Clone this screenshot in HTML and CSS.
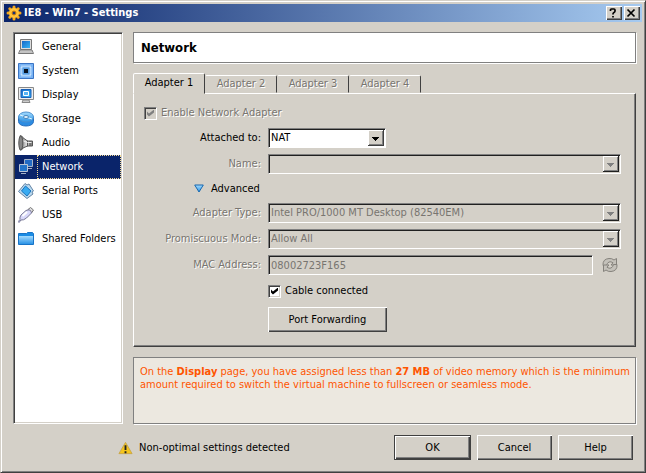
FILE: index.html
```html
<!DOCTYPE html>
<html lang="en">
<head>
<meta charset="utf-8">
<title>IE8 - Win7 - Settings</title>
<link rel="stylesheet" href="styles.css">
</head>
<body>
<svg class="defs" width="0" height="0" aria-hidden="true">
  <defs>
    <linearGradient id="blue" x1="0" y1="0" x2="1" y2="1"><stop offset="0" stop-color="#1668c8"/><stop offset="1" stop-color="#35b4f5"/></linearGradient>
    <linearGradient id="sky" x1="0" y1="0" x2="0" y2="1"><stop offset="0" stop-color="#a5dcff"/><stop offset="1" stop-color="#2b93e6"/></linearGradient>
    <linearGradient id="metal" x1="0" y1="0" x2="1" y2="0"><stop offset="0" stop-color="#666"/><stop offset=".5" stop-color="#ddd"/><stop offset="1" stop-color="#777"/></linearGradient>
  </defs>
</svg>
<div class="window">
  <header class="titlebar">
    <svg class="gear" viewBox="0 0 16 16"><g stroke="#f5a81c" stroke-width="3" stroke-linecap="round"><path d="M8 2v12M2 8h12M3.800 3.800l8.400 8.400M12.200 3.800l-8.400 8.400"/></g><circle cx="8" cy="8" r="5" fill="#ffc43a"/><circle cx="8" cy="8" r="2" fill="#173277" stroke="#d98200"/></svg>
    <h1>IE8 - Win7 - Settings</h1>
    <button class="caption" aria-label="Help"><svg viewBox="0 0 12 10"><path d="M3.500 3V2q0-1 1-1h2.500q1 0 1 1v1q0 1-1 1.500T6 6v.5M6 8v1.500" fill="none" stroke="#000" stroke-width="1.700"/></svg></button>
    <button class="caption" aria-label="Close"><svg viewBox="0 0 12 10"><path d="M2.500 1.500l7 7m0-7l-7 7" stroke="#000" stroke-width="1.700"/></svg></button>
  </header>
  <main class="body">
    <nav class="sidebar" aria-label="Settings pages">
      <a href="#"><span class="pic"><svg viewBox="0 0 16 16"><path d="M2.500.5h11v10h-11z" fill="#ddd" stroke="#777"/><path d="M4 2h8v7H4z" fill="url(#blue)"/><path d="M2 11h12l1.500 3.500H.5z" fill="#ddd" stroke="#777"/><path d="M2 13h12" stroke="#aaa"/></svg></span><span class="name">General</span></a>
      <a href="#"><span class="pic"><svg viewBox="0 0 16 16"><path d="M.5.5h15v15H.5z" fill="#78b3f5" stroke="#3b75c5"/><path d="M3.500 3.500h9v9h-9z" fill="none" stroke="#e5f5ff" stroke-width="2" stroke-dasharray="1 1"/><path d="M4.500 4.500h7v7h-7z" fill="#579de0"/><path d="M6 6h4v4H6z" fill="#081424"/></svg></span><span class="name">System</span></a>
      <a href="#"><span class="pic"><svg viewBox="0 0 16 16"><path d="M.5.500h15v12H.5z" fill="#eee" stroke="#888"/><path d="M3 2.500h10v8H3z" fill="url(#blue)" stroke="#1a61b8"/><path d="M5.500 4.500h5v4h-5z" fill="#58b5f5" stroke="#fff"/><path d="M5 13h6l1 2.500H4z" fill="#ccc" stroke="#888"/></svg></span><span class="name">Display</span></a>
      <a href="#"><span class="pic"><svg viewBox="0 0 16 16"><path d="M.5 6v4.500c0 6 15 6 15 0V6z" fill="#2c8ce2" stroke="#2b70bd"/><ellipse cx="8" cy="6" rx="7.500" ry="5" fill="url(#sky)" stroke="#4d91cf"/><path d="M8 6L2 4M8 6l6 2" stroke="#e4f7ff"/><ellipse cx="8" cy="6" rx="2.500" ry="1.500" fill="#e6f5ff" stroke="#4685bd"/></svg></span><span class="name">Storage</span></a>
      <a href="#"><span class="pic"><svg viewBox="0 0 16 16"><path d="M2 .8q2-.5 3 2L9.500 6h5v5h-5L5 13q-1 2.500-3 2z" fill="url(#metal)" stroke="#555"/><ellipse cx="2.800" cy="8" rx="2" ry="7" fill="#888" stroke="#555"/><path d="M9.500 5.500v6M12 6v5" stroke="#555"/><path d="M5.500 6l4 1.500h4" fill="none" stroke="#eee"/></svg></span><span class="name">Audio</span></a>
      <a href="#" class="current" aria-current="page"><span class="pic"><svg viewBox="0 0 16 16"><path d="M6.500.500h8v7h-8z" fill="#236bc4" stroke="#a4b2c8"/><path d="M10 9.500h4" stroke="#a4b2c8"/><path d="M1.500 5.500h8v7h-8z" fill="#2474c9" stroke="#bac5d5"/><path d="M3 14.500h5" stroke="#a4b2c8"/></svg></span><span class="name">Network</span></a>
      <a href="#"><span class="pic"><svg viewBox="0 0 16 16"><path d="M.5 8.500L7 .5l2 1.500 2-1 4.500 7-1.500 1 1 2-6 4.500z" fill="#b9d9ef" stroke="#6685a5"/><path d="M3.500 8l4-5 5.500 5-4 5z" fill="#38abf2" stroke="#1973bd"/></svg></span><span class="name">Serial Ports</span></a>
      <a href="#"><span class="pic"><svg viewBox="0 0 16 16"><path d="M10 2.500l2.500-2 3 2.500-2 3z" fill="#ddd" stroke="#777"/><path d="M3 8l5-4.500q5-2 5.500 2.500l-5 5q-3 2.500-5.500 2l-2 2.500-.8-.8L2 12.500Q1.500 10 3 8z" fill="#d8d8fa" stroke="#777795"/><path d="M4.500 9l4.500-4" stroke="#fff" stroke-width="2"/></svg></span><span class="name">USB</span></a>
      <a href="#"><span class="pic"><svg viewBox="0 0 16 16"><path d="M.5 2.500h8l1-1h5l1 1v11H.5z" fill="#1b8ce4" stroke="#1874c8"/><path d="M1 5h14v8H1z" fill="url(#sky)"/></svg></span><span class="name">Shared Folders</span></a>
    </nav>
    <section class="content">
      <h2>Network</h2>
      <div class="tabset">
        <div class="tabs" role="tablist">
          <button role="tab" aria-selected="true">Adapter 1</button>
          <button role="tab" aria-selected="false">Adapter 2</button>
          <button role="tab" aria-selected="false">Adapter 3</button>
          <button role="tab" aria-selected="false">Adapter 4</button>
        </div>
        <div class="panel" role="tabpanel">
          <label class="check off enable"><input type="checkbox" checked disabled>Enable Network Adapter</label>
          <div class="form">
            <label for="attached">Attached to:</label>
            <select id="attached" class="short"><option>NAT</option></select>
            <label for="name" class="off">Name:</label>
            <select id="name" disabled><option></option></select>
            <button class="advanced"><svg viewBox="0 0 10 9"><path d="M.7 1h8.600L5 8z" fill="url(#sky)" stroke="#1767ae"/></svg>Advanced</button>
            <label for="type" class="off">Adapter Type:</label>
            <select id="type" disabled><option>Intel PRO/1000 MT Desktop (82540EM)</option></select>
            <label for="mode" class="off">Promiscuous Mode:</label>
            <select id="mode" disabled><option>Allow All</option></select>
            <label for="mac" class="off">MAC Address:</label>
            <div class="mac"><input id="mac" type="text" value="08002723F165" disabled><button class="refresh" aria-label="Refresh" disabled><svg viewBox="0 0 16 16"><g fill="#c4c1ba" stroke="#85827c"><path d="M1 8.500Q.5 2 7 1.500q3-.3 5 1.500l2.500-1.500V8H9l2-2.200Q9 4.200 7 5 5 6 4.500 8.500z"/><path d="M15 7.500q.5 6.500-6 7-3 .3-5-1.500l-2.500 1.500V8H7l-2 2.200q2 1.600 4 .8 2-1 2.500-3.500z"/></g></svg></button></div>
            <label class="check cable"><input type="checkbox" checked>Cable connected</label>
            <button class="push forward">Port Forwarding</button>
          </div>
        </div>
      </div>
      <p class="notice">On the <b>Display</b> page, you have assigned less than <b>27 MB</b> of video memory which is the minimum amount required to switch the virtual machine to fullscreen or seamless mode.</p>
    </section>
  </main>
  <footer class="footer">
    <p class="status"><svg viewBox="0 0 16 14"><path d="M8 1l7 12H1z" fill="#f5c51c" stroke="#c9a64a" stroke-linejoin="round"/><path d="M8 4v5M8 10.500v2" stroke="#222" stroke-width="2"/></svg>Non-optimal settings detected</p>
    <button class="push default">OK</button>
    <button class="push">Cancel</button>
    <button class="push">Help</button>
  </footer>
</div>
</body>
</html>
```
FILE: styles.css
```css
* { box-sizing: border-box; }
body { margin: 0; }
body, button, input, select {
  font: 11px/14px "DejaVu Sans Condensed", Tahoma, sans-serif;
  color: #000;
}
h1, h2, p { margin: 0; }
button { padding: 0; border: 0; background: none; }
svg { display: block; flex: none; }
.defs { position: absolute; }

.window {
  display: flex;
  flex-direction: column;
  min-height: 100vh;
  padding: 2px;
  background: #d4d0c8;
  border: 1px solid;
  border-color: #d4d0c8 #404040 #404040 #d4d0c8;
  box-shadow: inset 1px 1px #fff, inset -1px -1px #808080;
}

.titlebar {
  display: flex;
  align-items: center;
  gap: 2px;
  height: 18px;
  margin: 1px;
  padding: 0 2px;
  background: linear-gradient(90deg, #0a246a, #a6caf0);
}
.titlebar h1 { flex: 1; color: #fff; font-size: 11px; font-weight: bold; }
.gear { width: 16px; height: 16px; }
.caption {
  width: 16px;
  height: 14px;
  padding: 1px;
  background: #d4d0c8;
  box-shadow: inset 1px 1px #fff, inset -1px -1px #404040, inset -2px -2px #808080;
}
.caption svg { width: 12px; height: 10px; }

.body { flex: 1; display: flex; gap: 10px; padding: 9px 7px 0 10px; }
.sidebar {
  width: 110px;
  padding: 2px 1px 0;
  background: #fff;
  border: 1px solid;
  border-color: #808080 #fff #fff #808080;
  box-shadow: inset 1px 1px #404040, inset -1px -1px #d4d0c8;
}
.sidebar a { display: flex; height: 24px; color: #000; text-decoration: none; }
.pic { display: grid; place-items: center; width: 22px; }
.pic svg { width: 16px; height: 16px; }
.name { flex: 1; padding: 5px; white-space: nowrap; }
.current { background: #0a246a; }
.current .name { color: #fff; outline: 1px dotted #f5db95; outline-offset: -1px; }

.content { flex: 1; display: flex; flex-direction: column; }
h2, .notice {
  border: 1px solid #808080;
  box-shadow: 1px 1px #fff;
}
h2 { height: 31px; padding: 8px 7px; background: #fff; font-size: 13px; line-height: 14px; }

.tabset { flex: 1; display: flex; flex-direction: column; margin-top: 10px; }
.tabs { display: flex; align-items: flex-end; }
.tabs button {
  width: 72px;
  height: 18px;
  border: 1px solid;
  border-color: #fff #404040 transparent transparent;
  border-radius: 2px 2px 0 0;
  color: #787570;
  text-shadow: 1px 1px #fff;
}
.tabs [aria-selected="true"] {
  height: 21px;
  margin-bottom: -1px;
  padding-bottom: 2px;
  background: #d4d0c8;
  border-left-color: #fff;
  color: #000;
  text-shadow: none;
  z-index: 1;
}
.panel {
  flex: 1;
  padding: 12px 14px 12px 10px;
  border: 1px solid;
  border-color: #fff #404040 #404040 #fff;
  box-shadow: inset -1px -1px #808080;
}

.off { color: #787570; text-shadow: 1px 1px #fff; }
.check { display: flex; align-items: center; gap: 4px; }
input[type="checkbox"] {
  appearance: none;
  width: 13px;
  height: 13px;
  margin: 0;
  background: #fff;
  border: 1px solid;
  border-color: #808080 #fff #fff #808080;
  box-shadow: inset 1px 1px #404040, inset -1px -1px #d4d0c8;
}
input[type="checkbox"]::before {
  content: "";
  display: block;
  width: 7px;
  height: 7px;
  margin: 2px;
  background: #000;
  clip-path: polygon(0 28%, 28% 56%, 100% 0, 100% 42%, 28% 100%, 0 72%);
}
input[type="checkbox"]:disabled { background: #d4d0c8; }
input[type="checkbox"]:disabled::before { background: #808080; }

.form {
  display: grid;
  grid-template-columns: 117px 1fr;
  align-items: center;
  gap: 6px 7px;
  margin-top: 8px;
}
.form > label:not(.check) { text-align: right; white-space: nowrap; }
select, input[type="text"] {
  width: 100%;
  height: 20px;
  margin: 0;
  padding: 0 2px;
  border: 1px solid;
  border-color: #808080 #fff #fff #808080;
  border-radius: 0;
  box-shadow: inset 1px 1px #202020;
  background: #fff;
}
select {
  appearance: none;
  background:
    conic-gradient(from -45deg at 50% 100%, #000 90deg, transparent 0) right 6px top 8px / 7px 4px no-repeat,
    linear-gradient(#d4d0c8, #d4d0c8) right 3px top 2px / 13px 13px no-repeat,
    linear-gradient(#808080, #808080) right 2px top 2px / 14px 14px no-repeat,
    linear-gradient(#fff, #fff) right 2px top 1px / 15px 15px no-repeat,
    linear-gradient(#404040, #404040) right 1px top 1px / 16px 16px no-repeat,
    #fff;
}
/* the arrow points down: a wedge opening upwards from the bottom centre */
select:disabled, input[type="text"]:disabled { opacity: 1; color: #787570; background-color: #d4d0c8; }
select:disabled {
  background-image:
    conic-gradient(from -45deg at 50% 100%, #808080 90deg, transparent 0),
    linear-gradient(#d4d0c8, #d4d0c8),
    linear-gradient(#808080, #808080),
    linear-gradient(#fff, #fff),
    linear-gradient(#202020, #202020);
}
.short { width: 118px; }
.advanced {
  grid-column: 1 / -1;
  display: flex;
  align-items: center;
  gap: 7px;
  height: 17px;
  padding-left: 50px;
}
.advanced svg { width: 10px; height: 9px; }
.mac { display: flex; gap: 9px; align-items: center; padding-right: 3px; }
.mac input { flex: 1; }
.refresh svg { width: 16px; height: 16px; }
.cable, .forward { grid-column: 2; }
.cable { height: 20px; }

.push {
  width: 75px;
  height: 25px;
  background: #d4d0c8;
  box-shadow: inset 1px 1px #fff, inset -1px -1px #404040, inset -2px -2px #808080;
}
.forward { width: 119px; }
.default { width: 77px; border: 1px solid #404040; }

.notice { min-height: 67px; margin-top: 10px; padding: 7px 0 7px 6px; background: #ece8e0; color: #ff5500; line-height: 13px; }

.footer { display: flex; align-items: center; gap: 6px; padding: 11px 10px 10px 115px; }
.status { flex: 1; display: flex; align-items: center; gap: 6px; }
.status svg { width: 15px; height: 14px; }
```
